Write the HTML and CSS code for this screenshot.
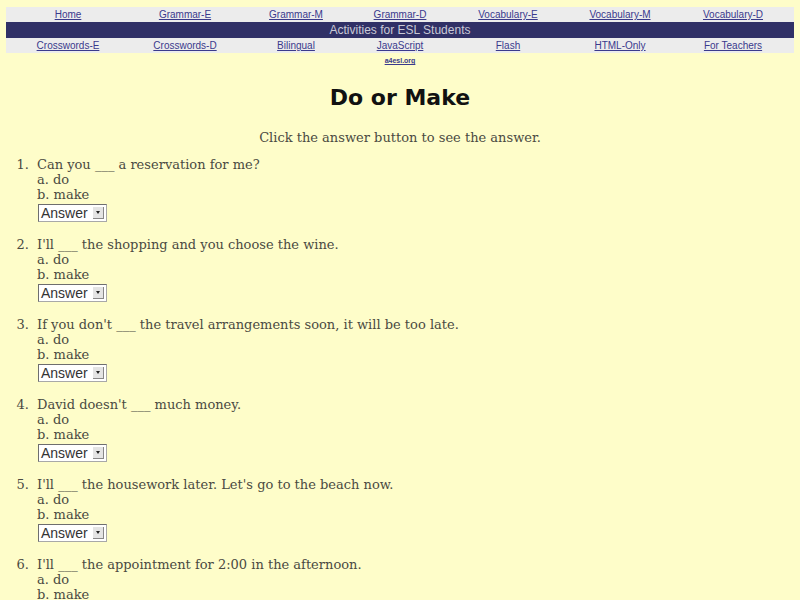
FILE: index.html
```html
<!DOCTYPE html>
<html>
<head>
<meta charset="utf-8">
<title>Do or Make</title>
<link rel="stylesheet" href="styles.css">
</head>
<body>
<div class="nav">
  <div class="navrow">
    <a href="#">Home</a>
    <a href="#">Grammar-E</a>
    <a href="#">Grammar-M</a>
    <a href="#">Grammar-D</a>
    <a href="#">Vocabulary-E</a>
    <a href="#">Vocabulary-M</a>
    <a href="#">Vocabulary-D</a>
  </div>
  <div class="banner">Activities for ESL Students</div>
  <div class="navrow">
    <a href="#">Crosswords-E</a>
    <a href="#">Crosswords-D</a>
    <a href="#">Bilingual</a>
    <a href="#">JavaScript</a>
    <a href="#">Flash</a>
    <a href="#">HTML-Only</a>
    <a href="#">For Teachers</a>
  </div>
  <div class="site"><a href="#">a4esl.org</a></div>
</div>

<h1 class="title">Do or Make</h1>
<p class="intro">Click the answer button to see the answer.</p>

<ol class="quiz">
  <li>
    <div>Can you ___ a reservation for me?</div>
    <div>a. do</div>
    <div>b. make</div>
    <span class="answer">Answer<span class="arrow"></span></span>
  </li>
  <li>
    <div>I'll ___ the shopping and you choose the wine.</div>
    <div>a. do</div>
    <div>b. make</div>
    <span class="answer">Answer<span class="arrow"></span></span>
  </li>
  <li>
    <div>If you don't ___ the travel arrangements soon, it will be too late.</div>
    <div>a. do</div>
    <div>b. make</div>
    <span class="answer">Answer<span class="arrow"></span></span>
  </li>
  <li>
    <div>David doesn't ___ much money.</div>
    <div>a. do</div>
    <div>b. make</div>
    <span class="answer">Answer<span class="arrow"></span></span>
  </li>
  <li>
    <div>I'll ___ the housework later. Let's go to the beach now.</div>
    <div>a. do</div>
    <div>b. make</div>
    <span class="answer">Answer<span class="arrow"></span></span>
  </li>
  <li>
    <div>I'll ___ the appointment for 2:00 in the afternoon.</div>
    <div>a. do</div>
    <div>b. make</div>
    <span class="answer">Answer<span class="arrow"></span></span>
  </li>
</ol>
</body>
</html>
```
FILE: styles.css
```css
html, body {
  margin: 0;
  padding: 0;
  background: #fefdc9;
}
body {
  font-family: "DejaVu Serif", serif;
  color: #4a4a42;
}
.nav {
  margin: 7px 6px 0;
}
.navrow {
  display: grid;
  grid-template-columns: 124fr 110fr 112fr 96fr 120fr 104fr 122fr;
  background: #ececec;
  height: 15px;
  align-items: center;
}
.navrow a {
  text-align: center;
  font-family: "Liberation Sans", Arial, sans-serif;
  font-size: 10px;
  line-height: 15px;
  color: #3a3a8c;
  text-decoration: underline;
}
.banner {
  background: #303066;
  color: #c9c9d6;
  font-family: "Liberation Sans", Arial, sans-serif;
  font-size: 12px;
  line-height: 16px;
  height: 16px;
  text-align: center;
}
.site {
  text-align: center;
  line-height: 8px;
  height: 8px;
  padding-top: 1px;
}
.site a {
  font-family: "Liberation Sans", Arial, sans-serif;
  font-size: 7px;
  font-weight: bold;
  color: #3a3a8c;
}
.title {
  margin: 21px 0 0;
  text-align: center;
  font-family: "DejaVu Sans", sans-serif;
  font-weight: bold;
  font-size: 22px;
  line-height: 30px;
  color: #111;
}
.intro {
  margin: 17px 0 0;
  text-align: center;
  font-size: 13px;
  line-height: 15px;
}
.quiz {
  margin: 12px 0 0;
  padding-left: 33px;
  font-size: 13px;
  line-height: 15px;
}
.quiz li {
  padding-left: 4px;
  margin-bottom: 15px;
}
.answer {
  display: inline-flex;
  align-items: center;
  justify-content: space-between;
  box-sizing: border-box;
  width: 69px;
  height: 18px;
  margin-top: 2px;
  margin-left: 1px;
  padding: 0 2px 0 2px;
  background: #fff;
  border: 1px solid #a8a8a8;
  border-top-color: #6e6e6e;
  border-left-color: #6e6e6e;
  font-family: "Liberation Sans", Arial, sans-serif;
  font-size: 14px;
  color: #333;
  vertical-align: top;
}
.arrow {
  position: relative;
  width: 11px;
  height: 12px;
  background: #e4e4e4;
  border-right: 1px solid #888;
  border-bottom: 1px solid #888;
  box-sizing: border-box;
}
.arrow::after {
  content: "";
  position: absolute;
  left: 3px;
  top: 4px;
  border-left: 2px solid transparent;
  border-right: 2px solid transparent;
  border-top: 3px solid #222;
}
```
